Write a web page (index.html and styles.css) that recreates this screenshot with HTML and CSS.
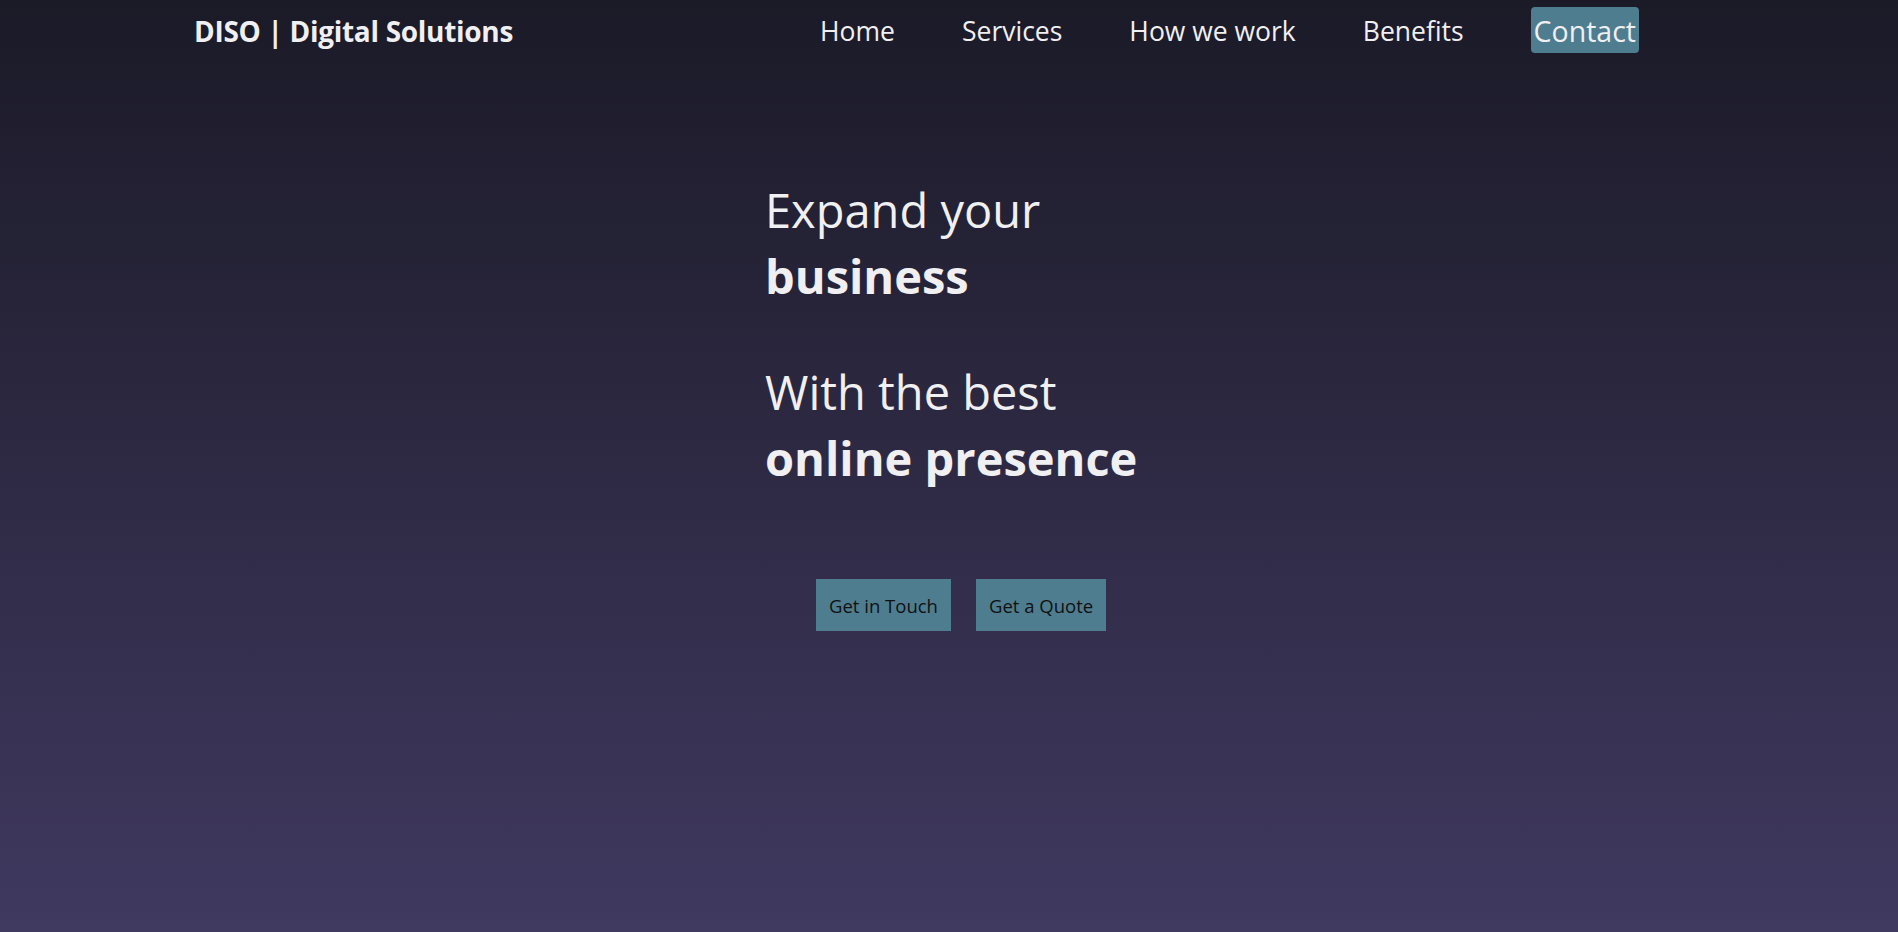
FILE: index.html
```html
<!DOCTYPE html>
<html lang="en">
<head>
<meta charset="utf-8">
<title>DISO | Digital Solutions</title>
<link rel="stylesheet" href="styles.css">
</head>
<body>
<header class="topbar">
  <div class="logo">DISO | Digital Solutions</div>
  <nav class="nav">
    <a class="nav-link" href="#">Home</a>
    <a class="nav-link" href="#">Services</a>
    <a class="nav-link" href="#">How we work</a>
    <a class="nav-link" href="#">Benefits</a>
    <a class="nav-link nav-contact" href="#">Contact</a>
  </nav>
</header>
<main class="hero">
  <div class="hero-text">
    <p class="hero-line">Expand your<br><strong>business</strong></p>
    <p class="hero-line">With the best<br><strong>online presence</strong></p>
  </div>
  <div class="hero-actions">
    <button class="btn">Get in Touch</button>
    <button class="btn">Get a Quote</button>
  </div>
</main>
</body>
</html>
```

FILE: styles.css
```css
html, body {
  margin: 0;
  padding: 0;
}
body {
  min-height: 100vh;
  background: linear-gradient(180deg, #1b1a27 0%, #403960 100%);
  font-family: "Open Sans", "Noto Sans", sans-serif;
  color: #f0eff2;
}
.topbar {
  display: flex;
  justify-content: space-between;
  align-items: center;
  padding: 7px 259px 0 194px;
  height: 46px;
}
.logo {
  font-size: 28px;
  font-weight: 700;
  letter-spacing: -0.3px;
  padding-top: 2px;
}
.nav {
  display: flex;
  align-items: center;
  gap: 67px;
}
.nav-link {
  color: #f0eff2;
  text-decoration: none;
  font-size: 26.5px;
  line-height: 44px;
  padding-top: 2px;
}
.nav-contact {
  background: #4e7d8f;
  border-radius: 4px;
  padding: 2px 3px 0 3px;
  font-size: 28.5px;
}
.hero {
  display: flex;
  flex-direction: column;
  padding: 0 0 0 765px;
}
.hero-text {
  margin-top: 124px;
}
.hero-line {
  margin: 0 0 50px 0;
  font-size: 47px;
  line-height: 66px;
  font-weight: 400;
}
.hero-line strong {
  font-weight: 700;
}
.hero-actions {
  display: flex;
  gap: 25px;
  margin: 38px 0 0 51px;
}
.btn {
  background: #4e7d8f;
  color: #111;
  border: none;
  font-family: inherit;
  font-size: 18.5px;
  height: 52px;
  padding: 0 13px;
}
```
